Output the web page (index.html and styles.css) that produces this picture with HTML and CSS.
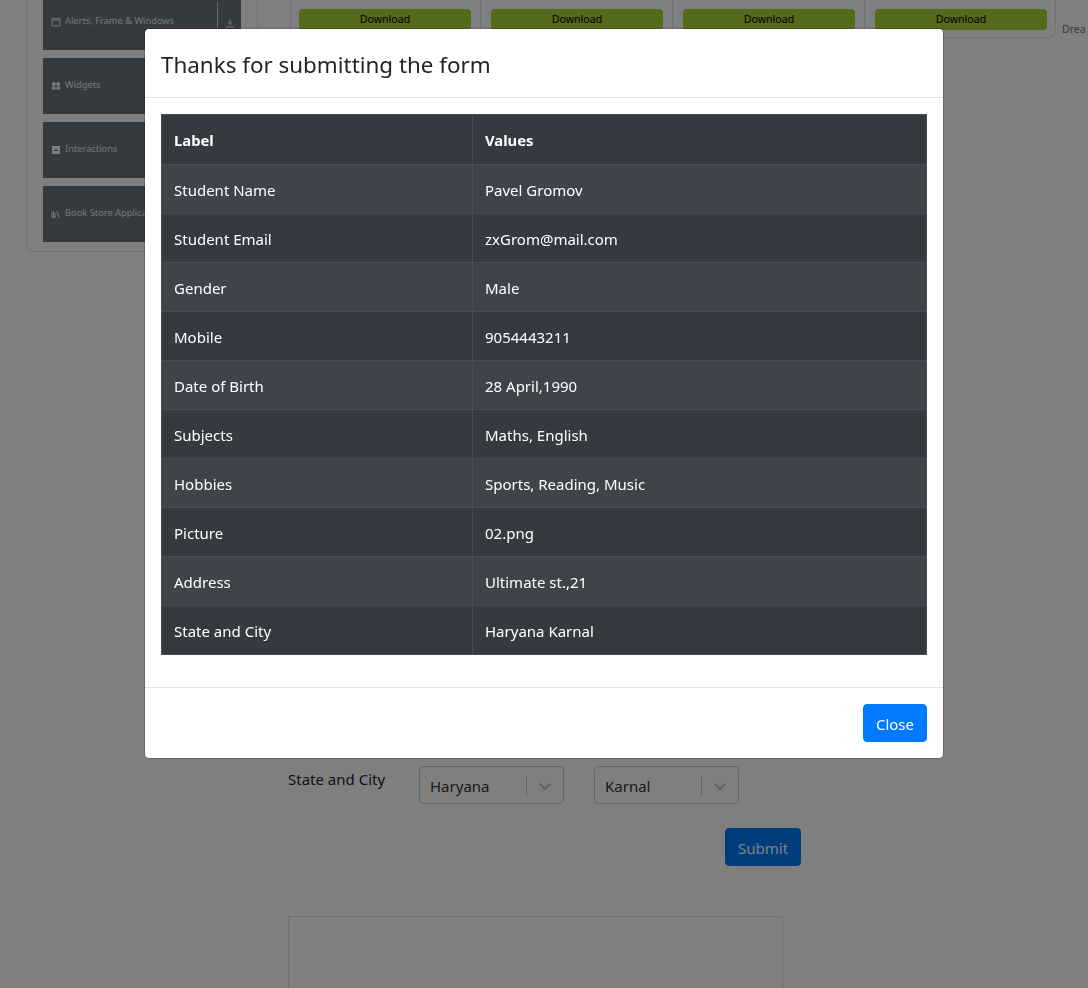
FILE: index.html
```html
<!DOCTYPE html>
<html lang="en">
<head>
    <meta charset="UTF-8">
    <meta name="viewport" content="width=device-width, initial-scale=1.0">
    <title>Practice Form</title>
    <link rel="stylesheet" href="styles.css">
</head>
<body>
    <div class="page">
        <aside class="sidebar">
            <div class="side-item">
                <svg class="side-icon" viewBox="0 0 10 10"><path d="M1 1.500h8v7.500h-8zM1 3h8" fill="none" stroke="currentColor" stroke-width="0.8"/></svg>
                <span class="side-text">Alerts, Frame &amp; Windows</span>
                <span class="side-action">
                    <svg class="action-icon" viewBox="0 0 10 10"><path d="M5 1v5.500M2.500 4l2.500 2.500 2.500-2.500M1 9h8" fill="none" stroke="currentColor" stroke-width="0.9"/></svg>
                </span>
            </div>
            <div class="side-item">
                <svg class="side-icon" viewBox="0 0 10 10"><path d="M1 1.500h3.500v3h-3.500zM5.500 1.500h3.500v3h-3.500zM1 5.500h3.500v3h-3.500zM5.500 5.500h3.500v3h-3.500z" fill="currentColor"/></svg>
                <span class="side-text">Widgets</span>
            </div>
            <div class="side-item">
                <svg class="side-icon" viewBox="0 0 10 10"><path fill-rule="evenodd" d="M1 1h8v8h-8zM3 4.500v1.500h4v-1.500z" fill="currentColor"/></svg>
                <span class="side-text">Interactions</span>
            </div>
            <div class="side-item">
                <svg class="side-icon" viewBox="0 0 10 10"><path d="M1 3v6M2.500 2v7M4 3.500v5.500M5.500 2l3 7" fill="none" stroke="currentColor" stroke-width="0.9"/></svg>
                <span class="side-text">Book Store Application</span>
            </div>
        </aside>

        <main class="main">
            <div class="top-row">
                <div class="downloads">
                    <div class="download-cell"><button class="download-btn">Download</button></div>
                    <div class="download-cell"><button class="download-btn">Download</button></div>
                    <div class="download-cell"><button class="download-btn">Download</button></div>
                    <div class="download-cell"><button class="download-btn">Download</button></div>
                </div>
                <span class="top-note">Drea</span>
            </div>

            <form class="practice-form">
                <div class="form-row">
                    <label class="form-label">State and City</label>
                    <div class="select-box">
                        <span class="select-value">Haryana</span>
                        <span class="select-divider"></span>
                        <svg class="select-arrow" viewBox="0 0 20 20"><path d="M4.500 7.500l5.500 5.500 5.500-5.500" fill="none" stroke="currentColor" stroke-width="2.400"/></svg>
                    </div>
                    <div class="select-box">
                        <span class="select-value">Karnal</span>
                        <span class="select-divider"></span>
                        <svg class="select-arrow" viewBox="0 0 20 20"><path d="M4.500 7.500l5.500 5.500 5.500-5.500" fill="none" stroke="currentColor" stroke-width="2.400"/></svg>
                    </div>
                </div>
                <button type="button" class="btn submit-btn">Submit</button>
                <div class="ad-box"></div>
            </form>
        </main>
    </div>

    <div class="backdrop"></div>

    <div class="modal">
        <div class="modal-header">
            <h2 class="modal-title">Thanks for submitting the form</h2>
        </div>
        <div class="modal-body">
            <table class="result-table">
                <thead>
                    <tr><th class="col-label">Label</th><th>Values</th></tr>
                </thead>
                <tbody>
                    <tr><td>Student Name</td><td>Pavel Gromov</td></tr>
                    <tr><td>Student Email</td><td>zxGrom@mail.com</td></tr>
                    <tr><td>Gender</td><td>Male</td></tr>
                    <tr><td>Mobile</td><td>9054443211</td></tr>
                    <tr><td>Date of Birth</td><td>28 April,1990</td></tr>
                    <tr><td>Subjects</td><td>Maths, English</td></tr>
                    <tr><td>Hobbies</td><td>Sports, Reading, Music</td></tr>
                    <tr><td>Picture</td><td>02.png</td></tr>
                    <tr><td>Address</td><td>Ultimate st.,21</td></tr>
                    <tr><td>State and City</td><td>Haryana Karnal</td></tr>
                </tbody>
            </table>
        </div>
        <div class="modal-footer">
            <button type="button" class="btn close-btn">Close</button>
        </div>
    </div>
</body>
</html>
```

FILE: styles.css
```css
* {
    box-sizing: border-box;
}

html, body {
    height: 100%;
}

body {
    margin: 0;
    overflow: hidden;
    background-color: #fff;
    color: #212529;
    font-family: 'Noto Sans', 'Open Sans', sans-serif;
    font-size: 16px;
    line-height: 24px;
}

.page {
    display: flex;
    align-items: flex-start;
    width: 1088px;
    height: 994px;
    margin-top: -6px;
    padding-left: 26px;
    overflow: hidden;
}

/* left menu, mostly hidden by the modal */
.sidebar {
    flex: none;
    display: flex;
    flex-direction: column;
    gap: 8px;
    width: 232px;
    padding: 0 16px 9px;
    border: 1px solid #dee2e6;
    border-top: none;
    border-radius: 0 0 8px 8px;
}

.side-item {
    display: flex;
    align-items: center;
    gap: 4px;
    height: 56px;
    padding-left: 8px;
    background-color: #6c757d;
    color: #fff;
    font-size: 9.3px;
    white-space: nowrap;
    overflow: hidden;
}

.side-icon {
    flex: none;
    width: 10px;
    height: 10px;
}

.action-icon {
    flex: none;
    width: 10px;
    height: 10px;
    margin-bottom: 6px;
}

.side-text {
    flex: 1;
    margin-bottom: 2px;
    opacity: 0.85;
}

.side-action {
    display: flex;
    align-items: center;
    justify-content: center;
    flex: none;
    width: 24px;
    height: 48px;
    margin-top: 8px;
    border-left: 1px solid #ced4da;
}

.main {
    flex: none;
    width: 798px;
    margin-left: 32px;
}

.top-row {
    display: flex;
    width: 798px;
}

.downloads {
    display: flex;
    flex: none;
    width: 766px;
    height: 44px;
    border: 1px solid #dee2e6;
    border-top: none;
    border-radius: 0 0 8px 0;
}

.download-cell {
    flex: none;
    width: 192px;
    padding: 15px 9px 0 10px;
    border-left: 1px solid #dee2e6;
}

.download-cell:first-child {
    width: 189px;
    padding-left: 8px;
    border-left: none;
}

.download-cell:last-child {
    width: 191px;
    padding-right: 8px;
}

.download-btn {
    display: block;
    width: 100%;
    height: 21px;
    padding: 0;
    border: none;
    border-radius: 4px;
    background-color: #aad539;
    color: #000;
    font-family: inherit;
    font-size: 10.6px;
    line-height: 21px;
}

.top-note {
    margin: 28px 0 0 6px;
    color: #6c757d;
    font-size: 10.5px;
    line-height: 14px;
}

.practice-form {
    width: 513px;
    margin: 728px 0 0 -2px;
}

.form-row {
    display: flex;
    align-items: flex-start;
    gap: 30px;
}

.form-label {
    width: 101px;
    margin-top: 1px;
    font-size: 15px;
    white-space: nowrap;
}

.select-box {
    display: flex;
    align-items: center;
    width: 145px;
    height: 38px;
    padding: 2px 8px 0 10px;
    border: 1px solid #ccc;
    border-radius: 4px;
    color: #333;
}

.select-value {
    flex: 1;
    font-size: 15px;
}

.select-divider {
    width: 1px;
    height: 20px;
    margin-right: 8px;
    background-color: #ccc;
}

.select-arrow {
    flex: none;
    width: 20px;
    height: 20px;
    color: #ccc;
}

.btn {
    display: block;
    height: 38px;
    padding: 2px 12px 0;
    border: 1px solid #007bff;
    border-radius: 4px;
    background-color: #007bff;
    color: #fff;
    font-family: inherit;
    font-size: 15px;
}

.submit-btn {
    width: 76px;
    margin: 24px 0 0 437px;
}

.ad-box {
    width: 495px;
    height: 200px;
    margin-top: 50px;
    border: 1px solid #dee2e6;
}

.backdrop {
    position: fixed;
    top: 0;
    left: 0;
    width: 100%;
    height: 100%;
    background-color: rgba(0, 0, 0, 0.5);
}

.modal {
    position: fixed;
    top: 28px;
    left: 144px;
    width: 800px;
    background-color: #fff;
    border: 1px solid rgba(0, 0, 0, 0.2);
    border-radius: 5px;
    background-clip: padding-box;
}

.modal-header {
    padding: 18px 16px 14px;
    border-bottom: 1px solid #dee2e6;
}

.modal-title {
    margin: 0;
    font-size: 22.4px;
    font-weight: 400;
    line-height: 36px;
}

.modal-body {
    padding: 16px;
}

.result-table {
    width: 100%;
    margin-bottom: 16px;
    border-collapse: collapse;
    background-color: #343a40;
    color: #fff;
    font-size: 15px;
}

.result-table th,
.result-table td {
    padding: 13px 12px 11px;
    border: 1px solid #454d55;
    text-align: left;
    vertical-align: top;
}

.result-table th {
    padding-bottom: 12px;
    font-size: 14.8px;
    font-weight: 700;
}

.col-label {
    width: 311px;
}

.result-table tbody tr:nth-child(odd) {
    background-color: rgba(255, 255, 255, 0.05);
}

.modal-footer {
    display: flex;
    justify-content: flex-end;
    padding: 16px;
    border-top: 1px solid #dee2e6;
}
```
